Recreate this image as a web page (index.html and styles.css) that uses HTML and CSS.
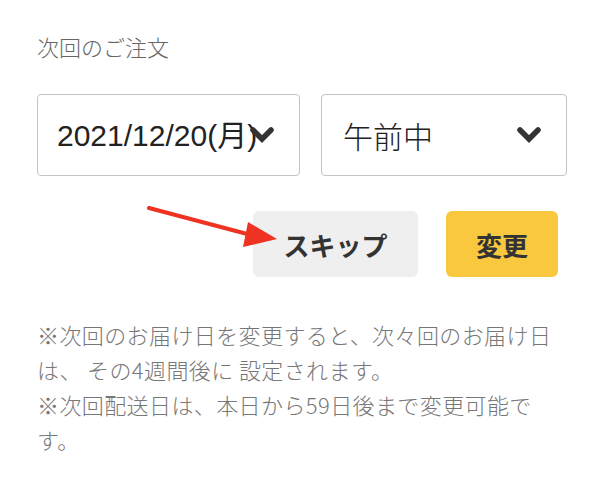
FILE: index.html
```html
<!DOCTYPE html>
<html lang="ja">
<head>
    <meta charset="UTF-8">
    <meta name="viewport" content="width=device-width, initial-scale=1.0">
    <title>次回のご注文</title>
    <link rel="stylesheet" href="styles.css">
</head>
<body>
    <div class="container">
        <h2 class="title">次回のご注文</h2>

        <!-- 日付と時間帯 -->
        <div class="select-row">
            <div class="select-box">
                <select class="date-select">
                    <option>2021/12/20(月)</option>
                </select>
                <svg class="chevron" viewBox="0 0 24 16" aria-hidden="true"><polyline points="3,3 12,12 21,3"/></svg>
            </div>
            <div class="select-box">
                <select class="time-select">
                    <option>午前中</option>
                </select>
                <svg class="chevron" viewBox="0 0 24 16" aria-hidden="true"><polyline points="3,3 12,12 21,3"/></svg>
            </div>
        </div>

        <!-- ボタン -->
        <div class="actions">
            <svg class="pointer" viewBox="0 0 140 50" aria-hidden="true">
                <line x1="2" y1="2" x2="104" y2="29"/>
                <polygon points="101,16 130,33 96,41"/>
            </svg>
            <button class="btn btn-skip">スキップ</button>
            <button class="btn btn-change">変更</button>
        </div>

        <p class="note">※次回のお届け日を変更すると、次々回のお届け日は、 その4週間後に 設定されます。<br>※次回配送日は、本日から59日後まで変更可能です。</p>
    </div>
</body>
</html>
```

FILE: styles.css
```css
body {
    margin: 0;
    background: #fff;
    font-family: "Noto Sans CJK JP", "Liberation Sans", sans-serif;
}
.container {
    padding: 0 33px 0 37px;
}
.title {
    margin: 31px 0 0;
    font-size: 22px;
    font-weight: 300;
    line-height: 30px;
    color: #666;
}
.select-row {
    display: grid;
    grid-template-columns: 263px 246px;
    gap: 21px;
    margin-top: 33px;
}
.select-box {
    position: relative;
}
.select-box select {
    appearance: none;
    -webkit-appearance: none;
    width: 100%;
    height: 82px;
    margin: 0;
    padding: 0 0 0 19px;
    border: 1px solid #c4c4c4;
    border-radius: 4px;
    background: #fff;
    color: #222;
    font-family: "Liberation Sans", "Noto Sans CJK JP", sans-serif;
    font-size: 30px;
}
.time-select {
    padding-left: 21px !important;
    font-family: "Noto Sans CJK JP", sans-serif !important;
    font-weight: 300;
}
.chevron {
    position: absolute;
    right: 26px;
    top: 33px;
    width: 24px;
    height: 16px;
    fill: none;
    stroke: #333;
    stroke-width: 5.5;
    stroke-linecap: round;
    stroke-linejoin: miter;
    pointer-events: none;
}
.actions {
    position: relative;
    display: flex;
    justify-content: flex-end;
    gap: 28px;
    margin-top: 35px;
    padding-right: 9px;
}
.pointer {
    position: absolute;
    left: 110px;
    top: -5px;
    width: 140px;
    height: 50px;
}
.pointer line {
    stroke: #ee3322;
    stroke-width: 4;
    stroke-linecap: round;
}
.pointer polygon {
    fill: #ee3322;
}
.btn {
    height: 66px;
    border: none;
    border-radius: 6px;
    font-family: "Noto Sans CJK JP", sans-serif;
    font-size: 26px;
    font-weight: bold;
    color: #333;
    cursor: pointer;
}
.btn-skip {
    width: 165px;
    background: #efefef;
}
.btn-change {
    width: 112px;
    background: #f9c83f;
}
.note {
    margin: 40px 0 0;
    font-size: 22px;
    font-weight: 300;
    letter-spacing: 0.4px;
    line-height: 35px;
    color: #777;
}
```
